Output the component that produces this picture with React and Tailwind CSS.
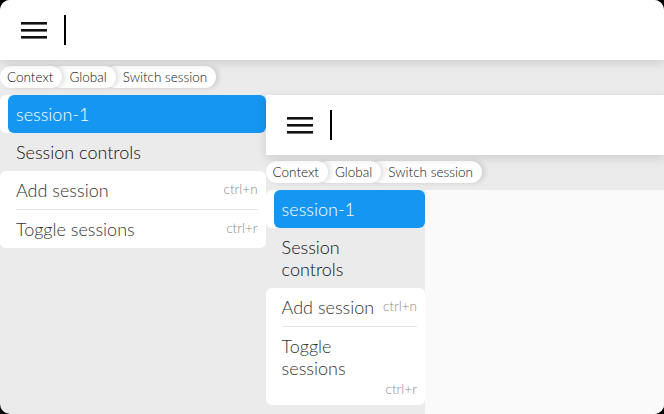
const crumbs = ['Context', 'Global', 'Switch session'];

const actions = [
  { label: 'Add session', keys: 'ctrl+n' },
  { label: 'Toggle sessions', keys: 'ctrl+r' },
];

function Burger() {
  return (
    <svg width="26" height="17" viewBox="0 0 26 17" className="block">
      <rect x="0" y="0" width="26" height="2.6" fill="#111" />
      <rect x="0" y="7" width="26" height="2.6" fill="#111" />
      <rect x="0" y="14" width="26" height="2.6" fill="#111" />
    </svg>
  );
}

function Crumbs() {
  const zs = ['z-30', 'z-20', 'z-10'];
  return (
    <div className="flex h-[35px] shrink-0 items-start pt-[6px]">
      {crumbs.map((c, i) => (
        <span
          key={c}
          className={`relative ${zs[i]} flex h-[22px] items-center rounded-full bg-white pr-[9px] text-[13.5px] font-light text-[#111] shadow-[3px_0_5px_rgba(0,0,0,0.12)] ${
            i === 0 ? 'pl-[7px]' : '-ml-3 pl-[19px]'
          }`}
        >
          {c}
        </span>
      ))}
    </div>
  );
}

function Sidebar() {
  return (
    <aside className="w-[40%] shrink-0">
      <div className="rounded-md bg-white pl-2">
        <div className="rounded-md bg-[#1596f0] py-2 pl-2 text-[18px] font-light leading-[22px] text-white">
          session-1
        </div>
      </div>
      <div className="py-2 pl-4 pr-2">
        <div className="max-w-[70%] text-[18px] font-light leading-[22px] text-[#111]">Session controls</div>
      </div>
      <div className="rounded-md bg-white">
        {actions.map((a, i) => (
          <div key={a.label} className="pl-4 pr-2">
            <div
              className={`flex flex-wrap items-start justify-between py-2 ${
                i === 0 ? 'border-b border-[#e6e6e6]' : ''
              }`}
            >
              <span className="max-w-[72%] text-[18px] font-light leading-[22px] text-[#333]">{a.label}</span>
              <span className="ml-auto min-w-[40px] pt-[2px] text-right text-[13.5px] font-light leading-[16px] text-[#8a8a8a]">
                {a.keys}
              </span>
            </div>
          </div>
        ))}
      </div>
    </aside>
  );
}

function Shell({ depth }) {
  return (
    <div className="flex min-h-0 flex-1 flex-col bg-[#ebebeb]">
      <header className="relative z-40 flex h-[60px] shrink-0 items-center bg-white pl-[21px] shadow-[0_3px_10px_rgba(0,0,0,0.13)]">
        <Burger />
        <span className="ml-[17px] h-[30px] w-[2px] bg-black" />
      </header>
      <Crumbs />
      <div className="flex min-h-0 flex-1">
        <Sidebar />
        <main className="flex min-h-0 flex-1 flex-col bg-[#fafafa]">
          {depth === 0 && <Shell depth={1} />}
        </main>
      </div>
    </div>
  );
}

export default function App() {
  return (
    <div className="h-[414px] w-[664px] bg-black font-['Lato',sans-serif]">
      <div className="flex h-full flex-col overflow-hidden rounded-[10px]">
        <Shell depth={0} />
      </div>
    </div>
  );
}
